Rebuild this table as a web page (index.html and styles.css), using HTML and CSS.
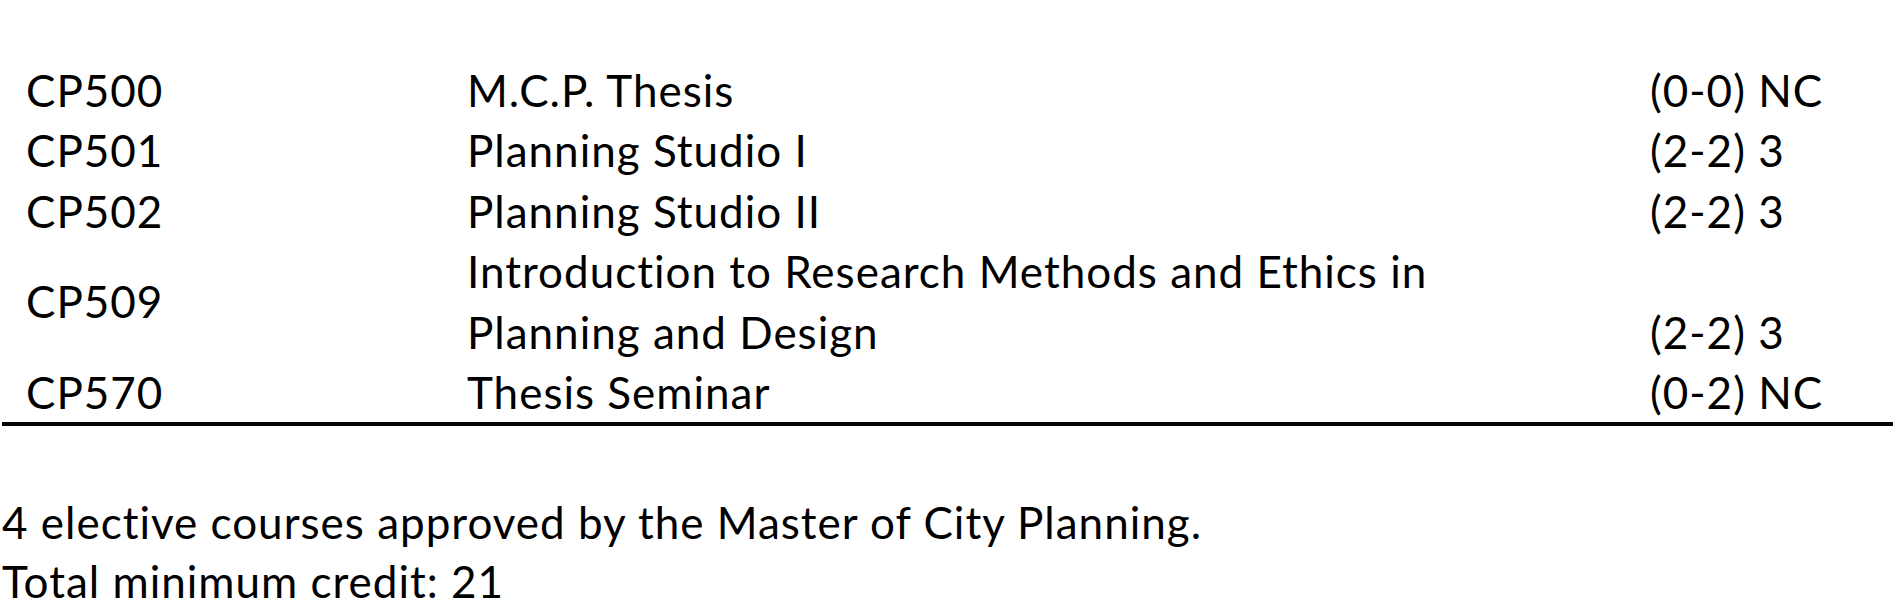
FILE: index.html
```html
<!DOCTYPE html>
<html lang="en">
<head>
<meta charset="utf-8">
<title>Course list</title>
<link rel="stylesheet" href="styles.css">
</head>
<body>
<div class="page">
  <div class="courses">
    <div class="row"><span class="code">CP500</span><span class="title">M.C.P. Thesis</span><span class="credit">(0-0) NC</span></div>
    <div class="row"><span class="code">CP501</span><span class="title">Planning Studio I</span><span class="credit">(2-2) 3</span></div>
    <div class="row"><span class="code">CP502</span><span class="title">Planning Studio II</span><span class="credit">(2-2) 3</span></div>
    <div class="row"><span class="code">CP509</span><span class="title">Introduction to Research Methods and Ethics in<br>Planning and Design</span><span class="credit credit-bottom">(2-2) 3</span></div>
    <div class="row"><span class="code">CP570</span><span class="title">Thesis Seminar</span><span class="credit">(0-2) NC</span></div>
  </div>
  <div class="notes">
    <p>4 elective courses approved by the Master of City Planning.</p>
    <p>Total minimum credit: 21</p>
  </div>
</div>
</body>
</html>
```
FILE: styles.css
```css
html, body {
  margin: 0;
  padding: 0;
  background: #ffffff;
}
body {
  font-family: Lato, "Open Sans", sans-serif;
  font-size: 44px;
  letter-spacing: 1px;
  color: #000000;
}
.page {
  width: 1900px;
  height: 613px;
  overflow: hidden;
}
.courses {
  margin: 0 7px 0 2px;
  padding: 60px 0 0 24px;
  border-bottom: 4px solid #000;
}
.row {
  display: grid;
  grid-template-columns: 441px 1183px 1fr;
  line-height: 60.4px;
}
.code {
  align-self: center;
}
.credit-bottom {
  align-self: end;
}
.notes {
  padding: 67px 0 0 2px;
}
.notes p {
  margin: 0;
  line-height: 59px;
}
```
